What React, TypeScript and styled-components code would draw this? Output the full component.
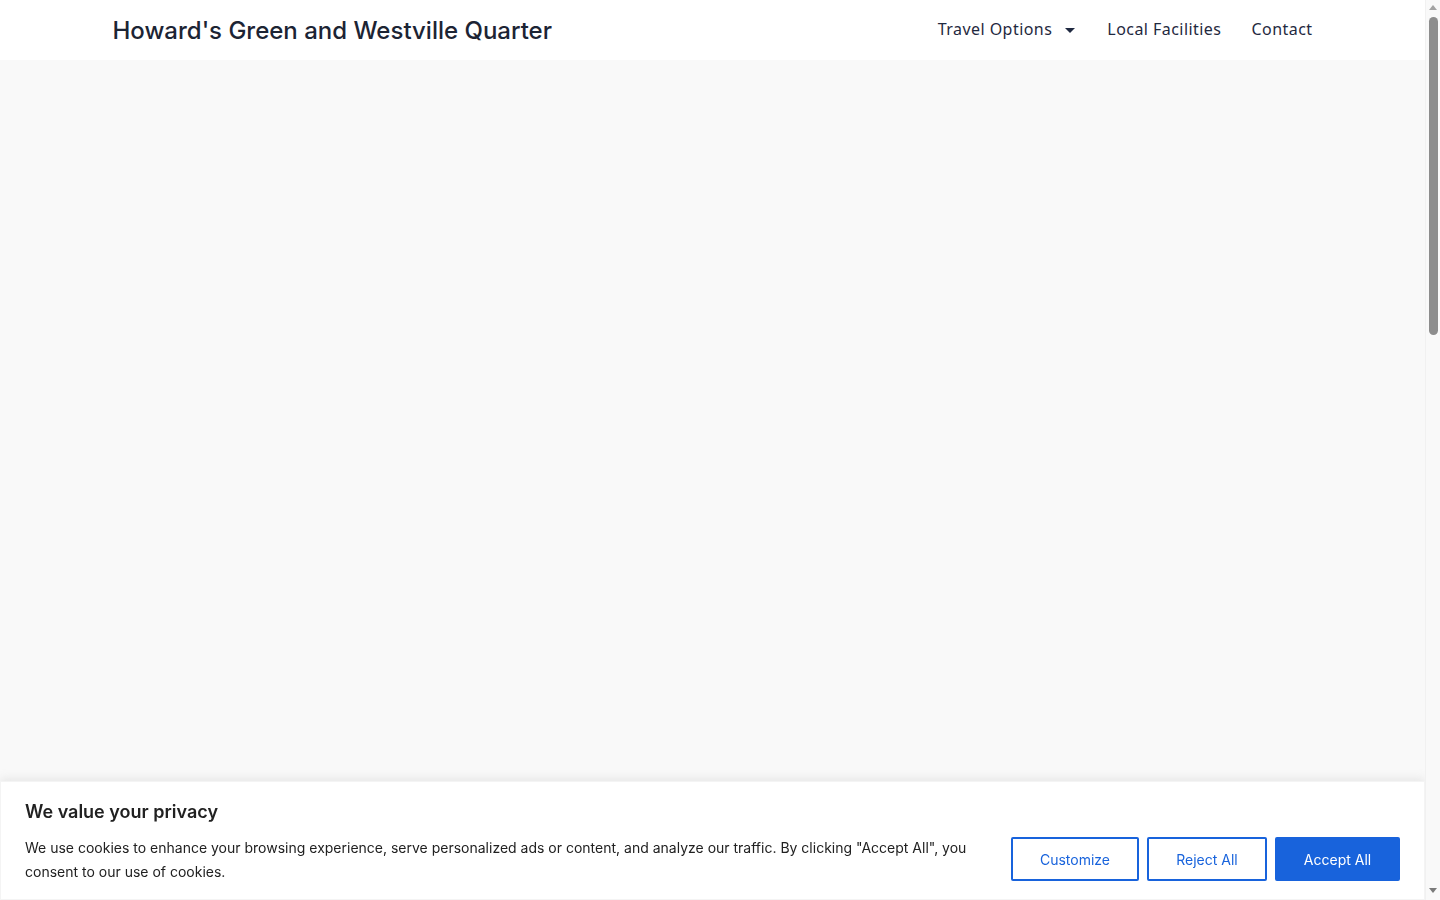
import styled, { createGlobalStyle } from "styled-components";

const GlobalStyle = createGlobalStyle`
    html, body {
        margin: 0;
        padding: 0;
    }
    body {
        background: #f9f9f9;
        font-family: "Inter", "Liberation Sans", sans-serif;
    }
`;

const Page = styled.div`
    margin-right: 15px;
`;

const Header = styled.header`
    background: #ffffff;
    height: 60px;
`;

const HeaderInner = styled.div`
    max-width: 1200px;
    height: 100%;
    margin: 0 auto;
    display: flex;
    align-items: center;
    justify-content: space-between;
`;

const SiteTitle = styled.a`
    font-family: "Inter", "Liberation Sans", sans-serif;
    font-size: 24px;
    font-weight: 500;
    color: #1c2434;
    text-decoration: none;
    margin-top: 1px;
`;

const Nav = styled.nav`
    display: flex;
    align-items: center;
    gap: 30px;
`;

const NavItem = styled.a`
    display: flex;
    align-items: center;
    gap: 13px;
    font-family: "Noto Sans", "Open Sans", sans-serif;
    font-size: 16px;
    letter-spacing: 0.45px;
    color: #1f2940;
    text-decoration: none;
    cursor: pointer;
    margin-top: -2px;
`;

const Caret = styled.span`
    width: 0;
    height: 0;
    border-left: 5.5px solid transparent;
    border-right: 5.5px solid transparent;
    border-top: 5.5px solid #1f2940;
    margin: 2px 2px 0 0;
`;

const Main = styled.main`
    height: 2410px;
`;

// the browser scrollbar of the screenshot, drawn over the right edge
const ScrollTrack = styled.div`
    position: fixed;
    top: 0;
    right: 0;
    bottom: 0;
    width: 15px;
    background: #f9f9f9;
    border-left: 1px solid #f1f1f1;
    box-sizing: border-box;
    display: flex;
    flex-direction: column;
    align-items: center;
    padding-top: 5px;
    z-index: 10;
`;

const Arrow = styled.span<{ $down?: boolean }>`
    width: 0;
    height: 0;
    border-left: 4px solid transparent;
    border-right: 4px solid transparent;
    ${(p) => (p.$down ? "border-top: 5px solid #7a7a7a;" : "border-bottom: 5px solid #a3a3a3;")}
    margin-top: ${(p) => (p.$down ? "auto" : "0")};
    margin-bottom: ${(p) => (p.$down ? "7px" : "0")};
`;

const Thumb = styled.span`
    width: 9px;
    height: 318px;
    margin-top: 7px;
    border-radius: 5px;
    background: #8d8d8d;
`;

const Banner = styled.div`
    position: fixed;
    left: 0;
    right: 15px;
    bottom: 0;
    background: #ffffff;
    border: 1px solid #f4f4f4;
    box-shadow: 0 -1px 10px rgba(172, 171, 171, 0.3);
    padding: 18px 24px 15px 24px;
    color: #212121;
`;

const BannerTitle = styled.p`
    margin: 0 0 12px;
    font-size: 18px;
    font-weight: 600;
    line-height: 24px;
`;

const BannerBody = styled.div`
    display: flex;
    align-items: center;
    justify-content: space-between;
    gap: 44px;
`;

const BannerText = styled.p`
    margin: 0;
    font-size: 14px;
    line-height: 24px;
    max-width: 950px;
`;

const Buttons = styled.div`
    display: flex;
    gap: 8px;
    flex-shrink: 0;
    margin-top: -2px;
`;

const Button = styled.button<{ $primary?: boolean; $w: number }>`
    width: ${(p) => p.$w}px;
    height: 44px;
    font-family: "Inter", "Liberation Sans", sans-serif;
    font-size: 14px;
    border-radius: 2px;
    border: 2px solid #1863dc;
    background: ${(p) => (p.$primary ? "#1863dc" : "#ffffff")};
    color: ${(p) => (p.$primary ? "#ffffff" : "#1863dc")};
    cursor: pointer;
`;

const App = () => {
    return (
        <>
            <GlobalStyle />
            <Page>
                <Header>
                    <HeaderInner>
                        <SiteTitle href="#">Howard's Green and Westville Quarter</SiteTitle>
                        <Nav>
                            <NavItem>
                                <span>Travel Options</span>
                                <Caret />
                            </NavItem>
                            <NavItem>Local Facilities</NavItem>
                            <NavItem>Contact</NavItem>
                        </Nav>
                    </HeaderInner>
                </Header>
                <Main />
            </Page>
            <Banner>
                <BannerTitle>We value your privacy</BannerTitle>
                <BannerBody>
                    <BannerText>
                        We use cookies to enhance your browsing experience, serve personalized ads or content, and
                        analyze our traffic. By clicking "Accept All", you consent to our use of cookies.
                    </BannerText>
                    <Buttons>
                        <Button $w={128}>Customize</Button>
                        <Button $w={120}>Reject All</Button>
                        <Button $w={125} $primary>
                            Accept All
                        </Button>
                    </Buttons>
                </BannerBody>
            </Banner>
            <ScrollTrack>
                <Arrow />
                <Thumb />
                <Arrow $down />
            </ScrollTrack>
        </>
    );
};

export default App;
